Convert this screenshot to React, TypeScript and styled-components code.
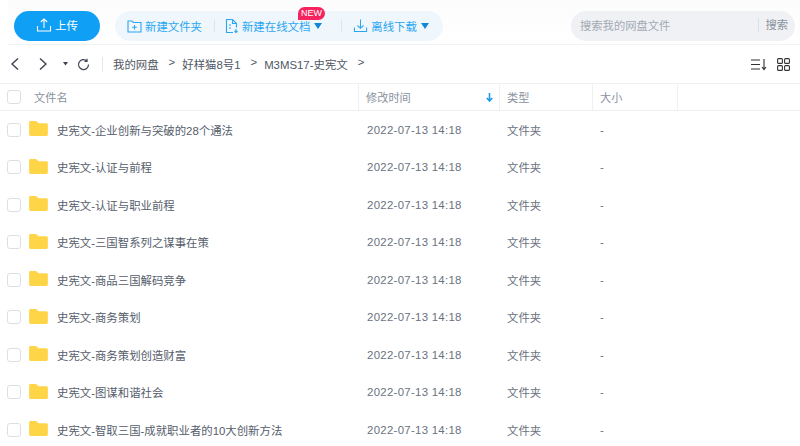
import React from 'react';
import styled, { createGlobalStyle } from 'styled-components';

const GlobalStyle = createGlobalStyle`
  html, body { margin: 0; padding: 0; background: #fff; overflow: hidden; }
  body { font-family: "Liberation Sans", "Noto Sans CJK SC", sans-serif; }
`;

const Page = styled.div`
  width: 800px;
  height: 446px;
  overflow: hidden;
  background: #fff;
  color: #4f5764;
`;

const TopBar = styled.div`
  height: 45px;
  margin-left: 8px;
  padding: 11px 0 0 6px;
  box-sizing: border-box;
  display: flex;
  align-items: flex-start;
  border-bottom: 1px solid #f2f3f5;
  background: linear-gradient(#fcfcfd, #fff);
`;

const UploadButton = styled.button`
  width: 86px;
  height: 30px;
  border: 0;
  border-radius: 15px;
  background: #0f9ff5;
  color: #fff;
  font: 11.5px "Liberation Sans", "Noto Sans CJK SC", sans-serif;
  display: flex;
  align-items: center;
  justify-content: center;
  gap: 3px;
  padding: 0 0 2px;
`;

const ActionGroup = styled.div`
  margin-left: 15px;
  width: 328px;
  height: 30px;
  border-radius: 15px;
  background: #eff7fd;
  display: flex;
  align-items: center;
  padding: 0 0 1px 12px;
  box-sizing: border-box;
`;

const ActionItem = styled.div`
  position: relative;
  display: flex;
  align-items: center;
  gap: 3px;
  color: #2ba6f0;
  font-size: 11.4px;
  white-space: nowrap;
`;

const ActionDivider = styled.span<{ $left: number; $right: number }>`
  width: 1px;
  height: 12px;
  background: #dde6ee;
  margin: 0 ${(p) => p.$right}px 0 ${(p) => p.$left}px;
`;

const Caret = styled.span`
  width: 0;
  height: 0;
  border-left: 4.5px solid transparent;
  border-right: 4.5px solid transparent;
  border-top: 6px solid #0f88d8;
  margin-left: 1px;
`;

const NewBadge = styled.span`
  position: absolute;
  left: 73px;
  top: -11px;
  width: 27px;
  height: 13px;
  border-radius: 7px 7px 7px 0;
  background: #f5245f;
  color: #fff;
  font-size: 9px;
  line-height: 13px;
  text-align: center;
`;

const SearchBox = styled.div`
  margin-left: auto;
  margin-right: 5px;
  width: 224px;
  height: 30px;
  border-radius: 15px;
  background: #f0f1f5;
  display: flex;
  align-items: center;
  justify-content: space-between;
  font-size: 11.3px;
  color: #a3a9b3;
  padding: 0 7px 2px 9px;
  box-sizing: border-box;
`;

const SearchSubmit = styled.span`
  border-left: 1px solid #dcdfe5;
  padding-left: 6px;
  line-height: 14px;
  color: #8a919c;
`;

const NavBar = styled.div`
  height: 38px;
  display: flex;
  align-items: center;
  padding: 0 10px 0 9px;
  font-size: 11.4px;
  color: #4f5764;
`;

const NavIcons = styled.div`
  display: flex;
  align-items: center;
  width: 93px;
  flex-shrink: 0;
`;

const NavDivider = styled.span`
  width: 1px;
  height: 15px;
  background: #e6e8eb;
  margin-right: 10px;
`;

const Crumbs = styled.div`
  display: flex;
  white-space: nowrap;
`;

const CrumbSep = styled.span`
  margin: 0 7px 0 10px;
`;

const ViewTools = styled.div`
  margin-left: auto;
  display: flex;
  gap: 10px;
  align-items: center;
`;

const HeaderRow = styled.div`
  height: 28px;
  box-sizing: border-box;
  display: grid;
  grid-template-columns: 359px 141px 93px 85px;
  border-top: 1px solid #eff0f2;
  border-bottom: 1px solid #eff0f2;
  font-size: 11.2px;
  color: #8a919e;
  align-items: stretch;
`;

const HeaderCell = styled.div`
  display: flex;
  align-items: center;
  padding-left: 7px;
  border-right: 1px solid #eff0f2;
  position: relative;
`;

const NameHeaderCell = styled(HeaderCell)`
  gap: 13px;
`;

const SortArrow = styled.svg`
  position: absolute;
  right: 5px;
  top: 9px;
`;

const Box = styled.span`
  width: 12px;
  height: 12px;
  border: 1px solid #dcdfe4;
  border-radius: 3px;
  flex-shrink: 0;
  background: #fff;
`;

const FileRow = styled.div`
  height: 37.5px;
  display: grid;
  grid-template-columns: 359px 141px 93px 85px;
  align-items: center;
  font-size: 11.4px;
  white-space: nowrap;
`;

const NameCell = styled.div`
  display: flex;
  align-items: center;
  padding-left: 7px;
  color: #555d6b;
`;

const FolderIcon = styled.svg`
  margin: -2px 9px 0 8px;
  flex-shrink: 0;
`;

const Cell = styled.div`
  padding-left: 7px;
  color: #6a7280;
`;

const DateCell = styled(Cell)`
  padding-left: 8px;
  letter-spacing: 0.3px;
`;

const RefreshIcon = styled.svg`
  margin-left: 7px;
`;

const files = [
  '史宪文-企业创新与突破的28个通法',
  '史宪文-认证与前程',
  '史宪文-认证与职业前程',
  '史宪文-三国智系列之谋事在策',
  '史宪文-商品三国解码竞争',
  '史宪文-商务策划',
  '史宪文-商务策划创造财富',
  '史宪文-图谋和谐社会',
  '史宪文-智取三国-成就职业者的10大创新方法',
];

const Stroke = { fill: 'none', stroke: 'currentColor', strokeWidth: 1.1 };

function App() {
  return (
    <Page>
      <GlobalStyle />
      <TopBar>
        <UploadButton>
          <svg width="16" height="16" viewBox="0 0 16 16" {...Stroke}>
            <path d="M8 11V2M4.800 5 8 2l3.200 3M1.500 9v5h13V9" />
          </svg>
          上传
        </UploadButton>
        <ActionGroup>
          <ActionItem>
            <svg width="15" height="14" viewBox="0 0 15 14" {...Stroke}>
              <path d="M1 2h4l1.500 1.500H14V13H1zM7.500 6v4.500M5.200 8.200h4.600" />
            </svg>
            新建文件夹
          </ActionItem>
          <ActionDivider $left={12} $right={10} />
          <ActionItem>
            <svg width="14" height="16" viewBox="0 0 14 16" {...Stroke}>
              <path d="M8 14.500H1.500v-13h6l4 4v4M7.500 1.500v4h4M4 7h2M4 10h2M11 11v3.500M9.500 13l1.500 1.500 1.500-1.500" />
            </svg>
            新建在线文档
            <Caret />
            <NewBadge>NEW</NewBadge>
          </ActionItem>
          <ActionDivider $left={19} $right={11} />
          <ActionItem>
            <svg width="15" height="15" viewBox="0 0 16 16" {...Stroke}>
              <path d="M8 1.500V11M4.800 8 8 11l3.200-3M1.500 10v4.500h13V10" />
            </svg>
            离线下载
            <Caret />
          </ActionItem>
        </ActionGroup>
        <SearchBox>
          搜索我的网盘文件
          <SearchSubmit>搜索</SearchSubmit>
        </SearchBox>
      </TopBar>
      <NavBar>
        <NavIcons>
          <svg width="12" height="14" viewBox="0 0 12 14" fill="none" stroke="#3d4450" strokeWidth="1.400">
            <path d="M9 1.500 3 7l6 5.500" />
          </svg>
          <svg width="12" height="14" viewBox="0 0 12 14" fill="none" stroke="#3d4450" strokeWidth="1.400" style={{ marginLeft: 16 }}>
            <path d="m3 1.500 6 5.500-6 5.500" />
          </svg>
          <svg width="8" height="6" viewBox="0 0 8 6" fill="#3d4450" style={{ marginLeft: 13 }}>
            <path d="M1 1h5L3.500 4.500z" />
          </svg>
          <RefreshIcon width="13" height="13" viewBox="0 0 13 13" fill="none" stroke="#3d4450" strokeWidth="1.200">
            <path d="M11.500 6.500a5 5 0 1 1-1.600-3.600M10 .8v2.500H7.500" />
          </RefreshIcon>
        </NavIcons>
        <NavDivider />
        <Crumbs>
          <span>我的网盘</span>
          <CrumbSep>&gt;</CrumbSep>
          <span>好样猫8号1</span>
          <CrumbSep>&gt;</CrumbSep>
          <span>M3MS17-史宪文</span>
          <CrumbSep>&gt;</CrumbSep>
        </Crumbs>
        <ViewTools>
          <svg width="17" height="13" viewBox="0 0 17 13" fill="none" stroke="#333" strokeWidth="1.100">
            <path d="M1 2h9M1 6.500h9M1 11h9M14 1v10M12 9l2 2.500L16 9" />
          </svg>
          <svg width="13" height="13" viewBox="0 0 13 13" fill="none" stroke="#333" strokeWidth="1.100">
            <rect x="0.600" y="0.600" width="4.800" height="4.800" rx="1" />
            <rect x="7.600" y="0.600" width="4.800" height="4.800" rx="1" />
            <rect x="0.600" y="7.600" width="4.800" height="4.800" rx="1" />
            <rect x="7.600" y="7.600" width="4.800" height="4.800" rx="1" />
          </svg>
        </ViewTools>
      </NavBar>
      <HeaderRow>
        <NameHeaderCell>
          <Box />
          文件名
        </NameHeaderCell>
        <HeaderCell>
          修改时间
          <SortArrow width="9" height="9" viewBox="0 0 9 9" fill="none" stroke="#1f9be8" strokeWidth="1.600">
            <path d="M4.500 0v7.500M1.800 5l2.700 3 2.700-3" />
          </SortArrow>
        </HeaderCell>
        <HeaderCell>类型</HeaderCell>
        <HeaderCell>大小</HeaderCell>
      </HeaderRow>
      {files.map((name) => (
        <FileRow key={name}>
          <NameCell>
            <Box />
            <FolderIcon width="19" height="15" viewBox="0 0 20 16">
              <path fill="#ffd548" d="M1.500 0h6L10 2.500h8.500A1.500 1.500 0 0 1 20 4v10.500a1.500 1.500 0 0 1-1.500 1.500h-17A1.500 1.500 0 0 1 0 14.500v-13A1.500 1.500 0 0 1 1.500 0z" />
            </FolderIcon>
            {name}
          </NameCell>
          <DateCell>2022-07-13 14:18</DateCell>
          <Cell>文件夹</Cell>
          <Cell>-</Cell>
        </FileRow>
      ))}
    </Page>
  );
}

export default App;
